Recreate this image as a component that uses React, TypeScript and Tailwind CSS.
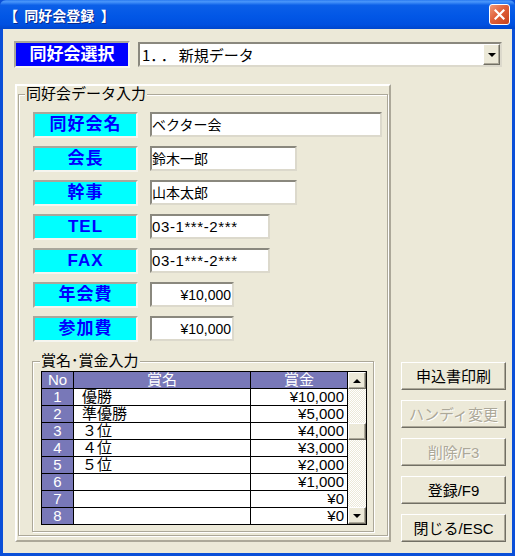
import React from "react";

const raised =
  "border border-t-white border-l-white border-b-[#716f64] border-r-[#716f64] shadow-[inset_-1px_-1px_0_#aca899]";
const sunken =
  "border-2 border-t-[#8a887e] border-l-[#8a887e] border-b-[#dcd9cc] border-r-[#dcd9cc] bg-white";
const etched =
  "border border-[#aca899] shadow-[inset_1px_1px_0_#ffffff,1px_1px_0_#ffffff]";
const labelBorder =
  "border-2 border-t-[#a9a79b] border-l-[#a9a79b] border-b-[#f6f5ef] border-r-[#f6f5ef]";

const fields = [
  { label: "同好会名", value: "ベクター会", w: "w-[232px]" },
  { label: "会長", value: "鈴木一郎", w: "w-[147px]" },
  { label: "幹事", value: "山本太郎", w: "w-[147px]" },
  { label: "TEL", value: "03-1***-2***", w: "w-[120px]", wide: true },
  { label: "FAX", value: "03-1***-2***", w: "w-[120px]", wide: true },
  { label: "年会費", value: "¥10,000", w: "w-[84px]", right: true },
  { label: "参加費", value: "¥10,000", w: "w-[84px]", right: true },
];

const prizes = [
  ["1", "優勝", "¥10,000"],
  ["2", "準優勝", "¥5,000"],
  ["3", "３位", "¥4,000"],
  ["4", "４位", "¥3,000"],
  ["5", "５位", "¥2,000"],
  ["6", "", "¥1,000"],
  ["7", "", "¥0"],
  ["8", "", "¥0"],
];

const buttons = [
  { label: "申込書印刷" },
  { label: "ハンディ変更", disabled: true },
  { label: "削除/F3", disabled: true },
  { label: "登録/F9" },
  { label: "閉じる/ESC" },
];

const ArrowUp = () => (
  <span className="w-0 h-0 border-x-[4px] border-x-transparent border-b-[4px] border-b-black" />
);
const ArrowDown = () => (
  <span className="w-0 h-0 border-x-[4px] border-x-transparent border-t-[4px] border-t-black" />
);

const TitleBar = () => (
  <div className="h-[29px] flex items-center rounded-t-[6px] bg-[linear-gradient(to_bottom,#2b7af0_0%,#4a97fb_6%,#0b5fe8_18%,#0257e6_55%,#0050e0_85%,#0046cc_100%)]">
    <span className="pl-[4px] whitespace-pre text-white font-bold text-[14px] leading-none font-['Noto_Sans_CJK_JP',sans-serif] [text-shadow:1px_1px_0_#0a2a8c]">
      {"【  同好会登録  】"}
    </span>
    <div className="ml-auto mr-[5px] w-[21px] h-[21px] rounded-[3px] border border-white flex items-center justify-center bg-[linear-gradient(135deg,#f09a78_0%,#e0603a_45%,#c8421b_100%)]">
      <svg width="11" height="11" viewBox="0 0 11 11">
        <path d="M1.5 1.5 L9.5 9.5 M9.5 1.5 L1.5 9.5" stroke="white" strokeWidth="2.2" strokeLinecap="square" />
      </svg>
    </div>
  </div>
);

const PrizeTable = () => (
  <div className="mt-[2px] ml-[8px] w-[326px] border border-black flex bg-white">
    <div className="w-[306px] flex flex-col">
      <div className="flex h-[17px] border-b border-black bg-[#7878b8] text-white text-[15px] leading-[16px]">
        <div className="w-[32px] border-r border-black text-center">No</div>
        <div className="w-[177px] border-r border-black text-center">賞名</div>
        <div className="w-[97px] border-r border-black text-center">賞金</div>
      </div>
      {prizes.map(([no, name, amount], i) => (
        <div
          key={no}
          className={`flex text-[15px] leading-[16px] ${i < prizes.length - 1 ? "h-[17px] border-b border-black" : "h-[16px]"}`}
        >
          <div className="w-[32px] border-r border-black bg-[#7878b8] text-white text-center">{no}</div>
          <div className="w-[177px] border-r border-black pl-[8px] text-black">{name}</div>
          <div className="w-[97px] border-r border-black pr-[3px] text-right text-black">{amount}</div>
        </div>
      ))}
    </div>
    <div className="w-[18px] flex flex-col bg-[repeating-conic-gradient(#ece9d8_0_25%,#ffffff_0_50%)] bg-size-[2px_2px]">
      <div className={`h-[17px] bg-[#ece9d8] flex items-center justify-center ${raised}`}>
        <ArrowUp />
      </div>
      <div className="h-[34px]" />
      <div className={`h-[17px] bg-[#ece9d8] ${raised}`} />
      <div className="flex-1" />
      <div className={`h-[17px] bg-[#ece9d8] flex items-center justify-center ${raised}`}>
        <ArrowDown />
      </div>
    </div>
  </div>
);

export default function App() {
  return (
    <div className="w-[515px] h-[556px] flex flex-col bg-[#0a4fd8] font-['Liberation_Sans','Noto_Sans_CJK_JP',sans-serif] select-none">
      <TitleBar />
      <div className="flex-1 mx-[3px] mb-[3px] bg-[#ece9d8] flex flex-col">
        {/* club selector */}
        <div className="flex items-center pl-[11px] pt-[12px] gap-[8px]">
          <div className={`w-[116px] h-[27px] bg-[#0000ff] text-white font-bold text-[17px] flex items-center justify-center ${labelBorder}`}>
            同好会選択
          </div>
          <div className={`w-[364px] h-[25px] flex items-center ${sunken}`}>
            <span className="pl-[2px] text-[15px] leading-none text-black font-['Noto_Sans_CJK_JP',sans-serif]">
              1<span className="tracking-[3px]">．．</span>新規データ
            </span>
            <div className={`ml-auto w-[17px] h-full bg-[#ece9d8] flex items-center justify-center ${raised}`}>
              <ArrowDown />
            </div>
          </div>
        </div>

        <div className="flex mt-[16px] ml-[12px] gap-[10px]">
          <div className="w-[376px] h-[458px] border-2 border-t-white border-l-white border-b-[#aca899] border-r-[#aca899]">
            <div className={`mt-[8px] ml-[1px] w-[370px] h-[442px] ${etched}`}>
              <span className="block w-fit -mt-[9px] ml-[6px] px-[1px] h-[16px] leading-[16px] text-[15px] text-black bg-[#ece9d8]">
                同好会データ入力
              </span>
              <div className="mt-[10px] ml-[14px] flex flex-col gap-[8px]">
                {fields.map((f) => (
                  <div key={f.label} className="flex items-start gap-[12px]">
                    <div className={`w-[105px] h-[26px] bg-[#00ffff] text-[#0000ff] font-bold text-[17px] tracking-[1px] flex items-center justify-center ${labelBorder}`}>
                      {f.label}
                    </div>
                    <div
                      className={`${f.w} h-[25px] flex items-center leading-none text-black ${f.wide ? "text-[15px] tracking-[0.6px]" : "text-[14px]"} ${f.right ? "justify-end pr-[1px]" : ""} ${sunken}`}
                    >
                      {f.value}
                    </div>
                  </div>
                ))}
              </div>
              <div className={`mt-[19px] ml-[13px] w-[342px] h-[171px] ${etched}`}>
                <span className="block w-fit -mt-[9px] ml-[7px] px-[1px] h-[16px] leading-[16px] text-[15px] text-black bg-[#ece9d8]">
                  賞名･賞金入力
                </span>
                <PrizeTable />
              </div>
            </div>
          </div>

          <div className="flex flex-col justify-end gap-[10px]">
            {buttons.map((b) => (
              <div
                key={b.label}
                className={`w-[105px] h-[28px] bg-[#ece9d8] flex items-center justify-center text-[15px] leading-none ${raised} ${b.disabled ? "text-[#aca899] [text-shadow:1px_1px_0_#ffffff]" : "text-black"}`}
              >
                {b.label}
              </div>
            ))}
          </div>
        </div>
      </div>
    </div>
  );
}
